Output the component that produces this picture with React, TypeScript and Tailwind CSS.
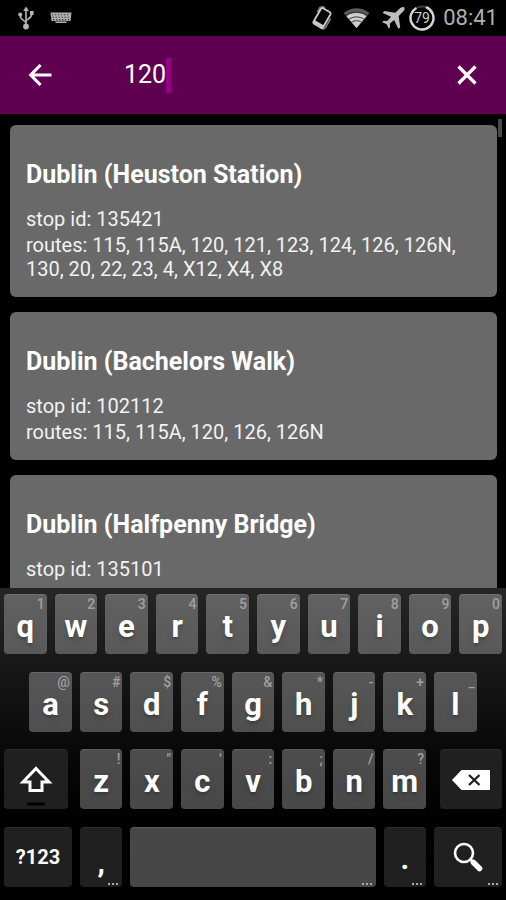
import React, { useState } from "react";
import clsx from "clsx";

type Stop = { name: string; id: string; routes?: string };

const stops: Stop[] = [
  {
    name: "Dublin (Heuston Station)",
    id: "135421",
    routes:
      "115, 115A, 120, 121, 123, 124, 126, 126N, 130, 20, 22, 23, 4, X12, X4, X8",
  },
  {
    name: "Dublin (Bachelors Walk)",
    id: "102112",
    routes: "115, 115A, 120, 126, 126N",
  },
  {
    name: "Dublin (Halfpenny Bridge)",
    id: "135101",
  },
];

const topRow = ["q1", "w2", "e3", "r4", "t5", "y6", "u7", "i8", "o9", "p0"];
const homeRow = ["a@", "s#", "d$", "f%", "g&", "h*", "j-", "k+", "l_"];
const bottomRow = ["z!", 'x"', "c'", "v:", "b;", "n/", "m?"];

function UsbIcon() {
  return (
    <svg width="16" height="24" viewBox="0 0 16 24" fill="none" stroke="#b4b4b4" strokeWidth="1.6">
      <path d="M8 3v17M8 17.500C8 14 2.200 14.500 2.200 9.500M8 15.500c0-2.500 5.800-2.500 5.800-8" />
      <path d="M8 0.500l2.800 4.500H5.200z" fill="#b4b4b4" stroke="none" />
      <circle cx="2.200" cy="8.500" r="2" fill="#b4b4b4" stroke="none" />
      <path d="M12 5h3.600v4H12z" fill="#b4b4b4" stroke="none" />
      <circle cx="8" cy="20.500" r="2.900" fill="#b4b4b4" stroke="none" />
    </svg>
  );
}

function KeyboardIcon() {
  return (
    <svg width="22" height="12" viewBox="0 0 22 12">
      <path d="M0.500 0.500h21l-1 8.500h-4v2H5.500V9h-4z" fill="#b0b0b0" />
      <path
        d="M2 2.800h18M2.500 5.200h17M3 7.600h16"
        stroke="#333"
        strokeWidth="1.100"
        strokeDasharray="1.300 1.700"
      />
      <path d="M5.500 9.200h11" stroke="#222" strokeWidth="0.800" />
    </svg>
  );
}

function RotateIcon() {
  return (
    <svg width="22" height="24" viewBox="0 0 22 24" fill="none">
      <path
        d="M6.500 6L9 1.500l3-0.800 2 1M19.500 12.500L14.500 21.500l-2.500 1.500-3-1.500"
        stroke="#777"
        strokeWidth="1.800"
      />
      <g transform="rotate(30 11 12)">
        <rect x="5.500" y="3" width="11" height="18" rx="1.500" fill="#000" stroke="#cacaca" strokeWidth="1.800" />
        <path d="M5.500 19h11" stroke="#cacaca" strokeWidth="3" />
      </g>
    </svg>
  );
}

function WifiIcon() {
  return (
    <svg width="27" height="20" viewBox="0 0 27 20">
      <path d="M0.500 5C8-1.300 19-1.300 26.500 5L13.500 20z" fill="#5a5a5a" />
      <path d="M3.500 8.300c5.500-4.400 14.500-4.400 20 0L13.500 20z" fill="#cfcfcf" />
      <path
        d="M3 7.500c6-4.600 15-4.600 21 0M6 11.200c4.500-3 10.500-3 15 0M8.500 14.200c3-2 7-2 10 0"
        fill="none"
        stroke="#333"
        strokeWidth="1"
      />
    </svg>
  );
}

function PlaneIcon() {
  return (
    <svg width="23" height="22" viewBox="0 0 23 22" fill="#bdbdbd">
      <path d="M22.300 0.500c0.900 1-0.300 3.200-1.800 4.700l-3.800 3.900 1.500 11.400-1.900 1.200-4.200-8.800-4.300 3.800 0.300 3.600-1.400 1.200-2-4.300-4.500-2 1.300-1.500 3.800 0.300 3.700-4.200L0.700 5.900l1.500-1.800 11 1.600 4-3.800C18.900 0.500 21.300-0.500 22.300 0.500z" />
    </svg>
  );
}

function Battery() {
  return (
    <svg width="26" height="26" viewBox="0 0 26 26">
      <circle cx="13" cy="13" r="11.500" fill="none" stroke="#3c3c3c" strokeWidth="2" />
      <circle
        cx="13"
        cy="13"
        r="11.500"
        fill="none"
        stroke="#d6d6d6"
        strokeWidth="2.400"
        strokeDasharray="62 30"
        transform="rotate(-70 13 13)"
      />
      <text x="13" y="18" textAnchor="middle" fontSize="14" fill="#cfcfcf">
        79
      </text>
    </svg>
  );
}

function StatusBar() {
  return (
    <header className="flex h-9 shrink-0 items-center bg-black pr-2 pl-[18px]">
      <UsbIcon />
      <div className="ml-4">
        <KeyboardIcon />
      </div>
      <div className="ml-auto flex items-center">
        <RotateIcon />
        <div className="ml-2.5">
          <WifiIcon />
        </div>
        <div className="ml-3">
          <PlaneIcon />
        </div>
        <div className="ml-1">
          <Battery />
        </div>
        <span className="ml-2 text-[22px] leading-none text-[#b0b0b0]">08:41</span>
      </div>
    </header>
  );
}

function StopCard({ name, id, routes }: Stop) {
  return (
    <li className="rounded-md bg-[#696969] px-4 pt-[34px] pb-4 text-[#f2f2f2]">
      <h2 className="text-[25px] leading-8 font-bold text-white">{name}</h2>
      <p className="mt-4 text-xl leading-6">stop id: {id}</p>
      {routes && <p className="mt-0.5 text-xl leading-6">routes: {routes}</p>}
    </li>
  );
}

type KeyProps = {
  label?: string;
  className?: string;
  dark?: boolean;
  more?: boolean;
  hint?: string;
  children?: React.ReactNode;
};

function Key({ label, className, dark, more, hint, children }: KeyProps) {
  return (
    <div className={clsx("px-1", className)}>
      <button
        type="button"
        aria-label={label}
        className={clsx(
          "relative flex h-[60px] w-full items-center justify-center rounded-sm border-t text-white",
          dark ? "border-[#2c2c2c] bg-[#202020]" : "border-white/10 bg-white/28"
        )}
      >
        {children}
        {hint && (
          <span className="absolute top-0.5 right-0.5 text-sm leading-none font-medium text-[#a0a0a0]">
            {hint}
          </span>
        )}
        {more && (
          <span className="absolute right-1 bottom-0.5 h-0.5 w-2.5 border-b-2 border-dotted border-[#aaa]" />
        )}
      </button>
    </div>
  );
}

function LetterKey({ keys, className }: { keys: string; className?: string }) {
  return (
    <Key label={keys[0]} hint={keys[1]} className={clsx("col-span-2", className)}>
      <span className="pt-1 text-[31px] leading-none font-bold text-shadow-lg">{keys[0]}</span>
    </Key>
  );
}

function Keyboard() {
  return (
    <section
      aria-label="Keyboard"
      className="flex h-[312px] shrink-0 flex-col justify-between bg-linear-to-b from-[#262626] via-[#0a0a0a] via-50% to-black pt-1.5 pb-[13px]"
    >
      <div className="grid grid-cols-20">
        {topRow.map((k) => (
          <LetterKey key={k} keys={k} />
        ))}
      </div>
      <div className="grid grid-cols-20">
        {homeRow.map((k, i) => (
          <LetterKey key={k} keys={k} className={i === 0 ? "col-start-2" : ""} />
        ))}
      </div>
      <div className="grid grid-cols-20">
        <Key label="Shift" dark className="col-span-3 pr-2">
          <svg width="34" height="44" viewBox="0 0 34 44" fill="none" className="mt-3">
            <path
              d="M17 4.500L30 18H23v8.500H11V18H4z"
              stroke="white"
              strokeWidth="3"
            />
            <path d="M9 40h16" stroke="black" strokeWidth="3" strokeLinecap="round" />
          </svg>
        </Key>
        {bottomRow.map((k) => (
          <LetterKey key={k} keys={k} />
        ))}
        <Key label="Delete" dark className="col-span-3 pl-2.5">
          <svg width="38" height="20" viewBox="0 0 38 20">
            <path d="M0 10L9.500 0H38v20H9.500z" fill="white" />
            <path d="M17 5l10.500 10M27.500 5L17 15" stroke="#202020" strokeWidth="2.400" />
          </svg>
        </Key>
      </div>
      <div className="grid grid-cols-20">
        <Key dark className="col-span-3">
          <span className="text-xl font-bold">?123</span>
        </Key>
        <Key dark more className="col-span-2">
          <span className="pt-3 text-3xl font-bold">,</span>
        </Key>
        <Key label="Space" more className="col-span-10" />
        <Key dark more className="col-span-2">
          <span className="pt-1 text-3xl font-bold">.</span>
        </Key>
        <Key label="Search" dark more className="col-span-3">
          <svg width="30" height="30" viewBox="0 0 30 30" fill="none" stroke="white">
            <circle cx="11" cy="11" r="9" strokeWidth="2.600" />
            <path d="M17.500 17.500l3 3" strokeWidth="3" />
            <path d="M20.500 20.500l6 6" strokeWidth="5.500" strokeLinecap="round" />
          </svg>
        </Key>
      </div>
    </section>
  );
}

export default function App() {
  const [query, setQuery] = useState("120");

  return (
    <div className="flex h-screen flex-col overflow-hidden bg-black font-['Roboto',sans-serif]">
      <StatusBar />
      <form
        className="flex h-[78px] shrink-0 items-center bg-[#5f0050] pr-7 pl-7 text-white"
        onSubmit={(e) => e.preventDefault()}
      >
        <button type="button" aria-label="Back">
          <svg width="24" height="24" viewBox="0 0 24 24" fill="none" stroke="white" strokeWidth="3.200">
            <path d="M12.500 2L2.800 12l9.700 10M2.800 12H23.500" />
          </svg>
        </button>
        <input
          type="text"
          aria-label="Search stops"
          value={query}
          onChange={(e) => setQuery(e.target.value)}
          className="ml-18 field-sizing-content text-[25px] caret-transparent outline-none"
        />
        <span className="h-[35px] w-[5px] bg-[#960088]" />
        <button type="button" aria-label="Clear" className="ml-auto" onClick={() => setQuery("")}>
          <svg width="22" height="22" viewBox="0 0 22 22" fill="none" stroke="white" strokeWidth="3.200">
            <path d="M2.500 2.500l17 17M19.500 2.500l-17 17" />
          </svg>
        </button>
      </form>
      <main className="relative min-h-0 flex-1 overflow-hidden">
        <ul className="flex flex-col gap-[15px] pt-[11px] pr-[9px] pl-2.5">
          {stops.map((stop) => (
            <StopCard key={stop.id} {...stop} />
          ))}
        </ul>
        {/* scroll thumb */}
        <div className="absolute top-[5px] right-1 h-[18px] w-1 bg-[#4a4a4a]" />
      </main>
      <Keyboard />
    </div>
  );
}
